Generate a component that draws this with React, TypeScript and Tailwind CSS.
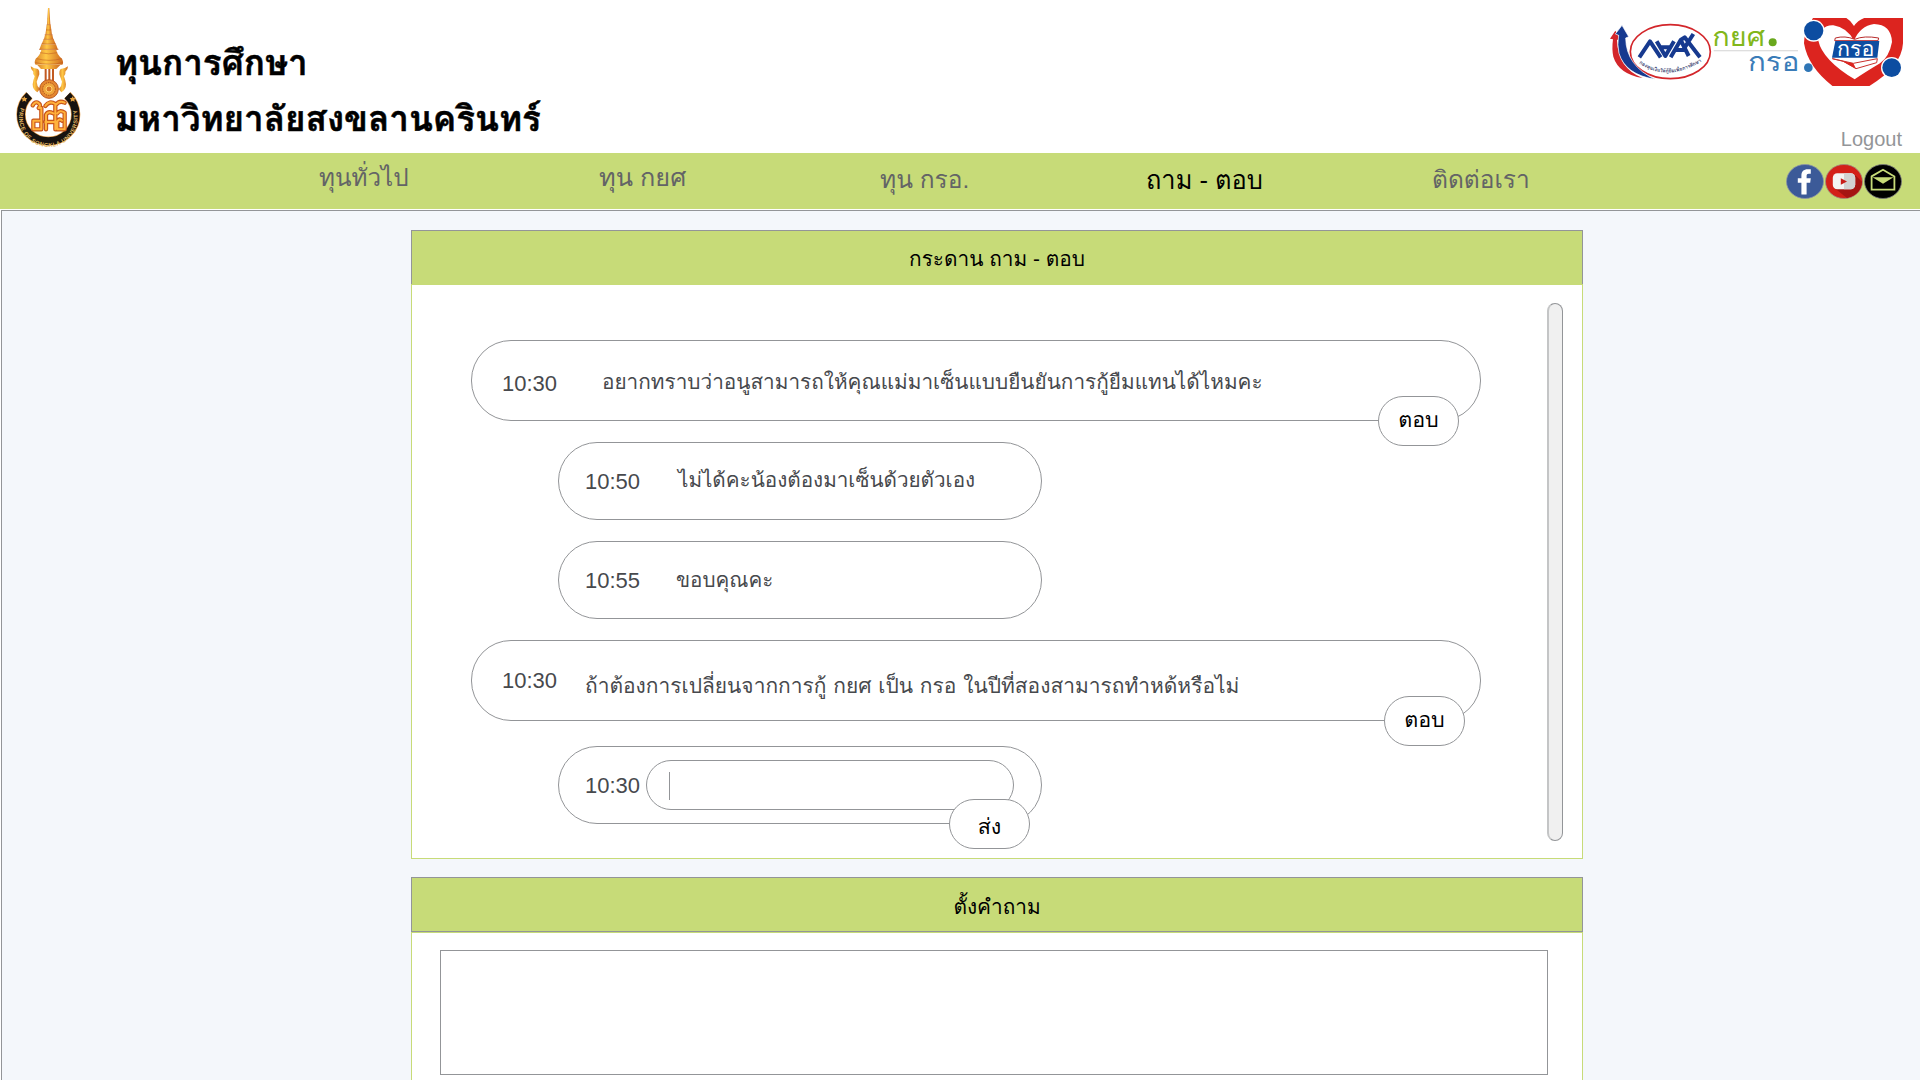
import type { ReactNode } from "react";

function Emblem() {
  return (
    <svg className="h-[153px] w-[100px] shrink-0" viewBox="0 0 300 459" aria-hidden="true">
      <defs>
        <linearGradient id="gold" x1="0" x2="1" y1="0" y2="0">
          <stop offset="0" stopColor="#d9822b" />
          <stop offset="0.4" stopColor="#ffc845" />
          <stop offset="1" stopColor="#cf6a1f" />
        </linearGradient>
        <path id="motto" d="M64 320 A88 87 0 1 0 226 320" />
      </defs>
      <g fill="url(#gold)">
        <path d="M144 24h4l2 34h-8z" />
        <path d="M142 56h8l1 18h-10z" />
        <path d="M140 74h12l2 16h-16z" />
        <path d="M138 90h16l2 14h-20z" />
        <path d="M135 104h22l3 14h-28z" />
        <path d="M131 118h30l6 14h-42z" />
        <path d="M124 133h44l6 16h-56z" />
        <path d="M124 150h45q2 14 17 26 6 12 1 18h-80q-6-6 0-18 13-10 17-26z" />
        <path d="M112 195h69l-12 12h-46z" />
        <path d="M134 207h6v38h-6zM145 207h6v36h-6zM156 207h6v38h-6z" fill="#c25a22" />
        <path d="M92 199q8 6 22 8 6 6 4 16l-8 22q0 12 10 22l-8 10q-14-8-14-24 2-14 6-24-6-8-4-14-8-6-8-16z" />
        <path d="M204 199q-8 6-22 8-6 6-4 16l8 22q0 12-10 22l8 10q14-8 14-24-2-14-6-24 6-8 4-14 8-6 8-16z" />
      </g>
      <g stroke="#b8511d" strokeWidth="2" fill="none" opacity="0.7">
        <path d="M140 74h12M138 90h16M134 104h24M130 118h32M124 132h44M117 148h59M110 176q37 10 75 0M106 188q42 9 82 0M120 158q26 7 52 0" />
      </g>
      <circle cx="147" cy="267" r="28" fill="#e5882f" stroke="#b95620" strokeWidth="3" />
      <circle cx="147" cy="267" r="19" fill="#f0a63c" stroke="#a94a1d" strokeWidth="3" strokeDasharray="4 3" />
      <circle cx="147" cy="267" r="9" fill="#d87528" stroke="#ffd36a" strokeWidth="3" />
      <path d="M88 286 A82 80 0 1 0 202 286" fill="none" stroke="#e9a04b" strokeWidth="28" />
      <path d="M88 286 A82 80 0 1 0 202 286" fill="none" stroke="#171310" strokeWidth="24" />
      <path d="M73 289l3 5 6 1-4 4 1 6-6-3-6 3 1-6-4-4 6-1zM218 289l3 5 6 1-4 4 1 6-6-3-6 3 1-6-4-4 6-1z" fill="#e7a23d" />
      <text fill="#e2b760" fontFamily="Liberation Sans, sans-serif" fontWeight="700" fontSize="17">
        <textPath href="#motto" startOffset="4" textLength="330" lengthAdjust="spacing">
          PRINCE OF SONGKLA UNIVERSITY
        </textPath>
      </text>
      <g fill="none" stroke="#c9561b" strokeWidth="13" strokeLinejoin="round" strokeLinecap="round">
        <path d="M98 316q8-14 18-6 8 6 0 14h8v64h-24v-26h18M136 318q12-18 30-6v76M138 388v-44q6-12 22-4M136 366h26M172 340q8-12 22-2v50h-22v-24q6-10 14-2M168 314q10-14 26-6" />
      </g>
      <g fill="none" stroke="#ffb13b" strokeWidth="6" strokeLinejoin="round" strokeLinecap="round">
        <path d="M98 316q8-14 18-6 8 6 0 14h8v64h-24v-26h18M136 318q12-18 30-6v76M138 388v-44q6-12 22-4M136 366h26M172 340q8-12 22-2v50h-22v-24q6-10 14-2M168 314q10-14 26-6" />
      </g>
    </svg>
  );
}

function LoanFundLogos() {
  return (
    <svg className="h-[90px] w-[320px]" viewBox="0 0 960 270" aria-hidden="true">
      <defs>
        <path id="fund-arc" d="M117 160 Q205 220 312 150" />
        <clipPath id="heart-box">
          <rect x="600" y="24" width="309" height="204" />
        </clipPath>
      </defs>

      <ellipse cx="211" cy="125" rx="120" ry="81" fill="#fff" stroke="#d3262b" strokeWidth="5" />
      <path d="M30 86 L46 62 L60 86 L51 90 Q54 176 128 204 Q56 192 40 140 Q35 118 39 88z" fill="#d3262b" />
      <path d="M46 72 L66 46 L86 80 L77 84 Q78 168 166 208 Q76 194 57 130 Q51 104 56 76z" fill="#16398f" stroke="#fff" strokeWidth="2" />
      <g fill="none" stroke="#16398f" strokeWidth="12" strokeLinejoin="round">
        <path d="M118 142 L150 94 L182 142" />
        <path d="M170 94 L196 138 L222 94 M182 112 H212" />
        <path d="M212 142 L242 90 L266 138 M224 120 H256" />
        <path d="M242 90 L254 82 L300 142 M252 116 L280 72" />
      </g>
      <text fill="#333a6c" fontFamily="Loma, Liberation Sans, sans-serif" fontWeight="700" fontSize="15">
        <textPath href="#fund-arc">กองทุนเงินให้กู้ยืมเพื่อการศึกษา</textPath>
      </text>

      <text x="337" y="108" fontSize="80" textLength="158" lengthAdjust="spacingAndGlyphs" fill="#82b71b" fontFamily="Loma, sans-serif">
        กยศ
      </text>
      <circle cx="518" cy="97" r="12" fill="#69a81d" />
      <rect x="341" y="120" width="253" height="4" fill="#dedede" />
      <text x="444" y="184" fontSize="80" textLength="154" lengthAdjust="spacingAndGlyphs" fill="#3a7cb8" fontFamily="Loma, sans-serif">
        กรอ
      </text>

      <g clipPath="url(#heart-box)">
        <path d="M640 22 H735 Q752 30 762 48 Q774 30 798 22 H909 V100 Q905 170 805 230 H700 Q624 172 612 100 Q612 70 630 40z" fill="#dc241f" />
        <path d="M764 208 Q668 150 655 92 Q660 44 700 46 Q740 52 762 92 Q780 48 822 42 Q874 44 876 96 Q868 140 840 160 Q790 190 764 208z" fill="#fff" />
      </g>
      <circle cx="625" cy="173" r="13" fill="#2f76b6" />
      <circle cx="641" cy="62" r="33" fill="#fff" />
      <circle cx="641" cy="62" r="29" fill="#0d4da1" />
      <circle cx="875" cy="173" r="32" fill="#fff" />
      <circle cx="875" cy="173" r="28" fill="#0d4da1" />
      <path d="M706 84 Q735 76 764 88 Q792 76 836 84 L834 92 H704z" fill="#fff" stroke="#b82a2a" strokeWidth="3" />
      <path d="M697 146 L760 160 L832 146 L830 158 L768 176 L730 154z" fill="#fff" stroke="#c9302c" strokeWidth="3" />
      <path d="M726 153 L760 160 L768 176z" fill="#dc241f" />
      <path d="M706 93 H838 L832 143 H696z" fill="#0d4da1" />
      <text x="711" y="138" fontSize="60" textLength="112" lengthAdjust="spacingAndGlyphs" fill="#fff" fontFamily="Loma, sans-serif">
        กรอ
      </text>
    </svg>
  );
}

function SocialIcons() {
  return (
    <div className="mt-[11px] flex h-[35px] gap-px">
      <svg className="h-[35px] w-[38px]" viewBox="0 0 38 35" aria-label="Facebook">
        <ellipse cx="19" cy="17.5" rx="18.5" ry="17" fill="#3c5a98" stroke="#8a93a8" strokeWidth="0.8" />
        <path d="M15.4 30.5V18.8h-3.6v-4.6h3.6v-2.8c0-4 2.4-6.2 6.2-6.2h3.2v4.6h-2c-1.6 0-2.2.8-2.2 2.2v2.2h4.2l-.6 4.6h-3.6v11.7z" fill="#fff" />
      </svg>
      <svg className="h-[35px] w-[38px]" viewBox="0 0 38 35" aria-label="YouTube">
        <ellipse cx="19" cy="17.5" rx="18.5" ry="17" fill="#d32019" stroke="#a08a80" strokeWidth="0.8" />
        <path d="M29.5 10.5 L37 17.8 Q36 31 22 34 L10 24.5z" fill="#a51512" />
        <rect x="7.8" y="9.3" width="22.4" height="16" rx="4.5" fill="#f4f4f4" />
        <path d="M19 9.3h6.7a4.5 4.5 0 0 1 4.5 4.5v7a4.5 4.5 0 0 1-4.5 4.5H19z" fill="#d2d2d2" />
        <path d="M15.8 14.2l6.2 3.3-6.2 3.3z" fill="#c81e1a" />
      </svg>
      <svg className="h-[35px] w-[38px]" viewBox="0 0 38 35" aria-label="Email">
        <ellipse cx="19" cy="17.5" rx="18.5" ry="17" fill="#000" stroke="#77777c" strokeWidth="0.8" />
        <path d="M7.6 12.4 L19 5.8 L30.4 12.4 V25.6 H7.6z" fill="none" stroke="#c7db78" strokeWidth="1.8" />
        <path d="M8.5 13.2 H29.5 L19 19.8z" fill="#c7db78" />
      </svg>
    </div>
  );
}

const navItems = [
  { label: "ทุนทั่วไป", box: "w-[280px] mt-[10px]", text: "text-[24.2px] text-[#636466]" },
  { label: "ทุน กยศ", box: "w-[281px] mt-[9px]", text: "text-[25.3px] text-[#636466]" },
  { label: "ทุน กรอ.", box: "w-[266px] mt-[12px]", text: "text-[24.5px] text-[#636466]" },
  { label: "ถาม - ตอบ", box: "w-[286px] mt-[12px]", text: "text-[25.4px] text-black" },
  { label: "ติดต่อเรา", box: "w-[354px] mt-[12px]", text: "text-[24.5px] text-[#636466]" },
];

function Bubble({ className, children }: { className: string; children: ReactNode }) {
  return <div className={`relative flex items-start border border-[#939598] bg-white ${className}`}>{children}</div>;
}

function Time({ className, children }: { className: string; children: string }) {
  return <span className={`shrink-0 text-[22px] leading-[30px] ${className}`}>{children}</span>;
}

function Message({ className, children }: { className: string; children: string }) {
  return <span className={`leading-[30px] whitespace-nowrap ${className}`}>{children}</span>;
}

function PillButton({ className, children }: { className: string; children: string }) {
  return (
    <button
      className={`absolute flex h-[50px] w-[81px] justify-center rounded-[25px] border border-[#939598] bg-white text-[21.5px] leading-[30px] text-black ${className}`}
    >
      {children}
    </button>
  );
}

export default function App() {
  return (
    <div className="h-screen w-full overflow-hidden bg-white font-['Liberation_Sans',Loma,sans-serif] text-[#47494d]">
      <header className="flex h-[153px]">
        <Emblem />
        <h1 className="ml-[15px] pt-[35px] text-[35px] leading-[56px] font-bold whitespace-nowrap text-black [-webkit-text-stroke:0.5px_black]">
          ทุนการศึกษา
          <br />
          มหาวิทยาลัยสงขลานครินทร์
        </h1>
        <div className="ml-auto flex flex-col pt-[10px]">
          <LoanFundLogos />
          <a className="mt-[27px] self-end pr-[18px] text-[20px] leading-[24px] text-[#939598]">Logout</a>
        </div>
      </header>

      <nav className="flex h-[56px] items-start bg-[#c7db78] pl-[319px]">
        {navItems.map((item) => (
          <a key={item.label} className={`shrink-0 leading-[30px] whitespace-nowrap ${item.box} ${item.text}`}>
            {item.label}
          </a>
        ))}
        <SocialIcons />
      </nav>

      <main className="mt-px ml-px h-[870px] border-t border-l border-[#939598] bg-[#f4f7fb] pt-[19px] pl-[409px]">
        <section className="w-[1172px]">
          <h2 className="flex h-[54px] justify-center border border-b-0 border-[#939598] bg-[#c7db78] pt-[13px] text-[20.8px] leading-[30px] text-black">
            กระดาน ถาม - ตอบ
          </h2>
          <div className="flex h-[575px] items-start border border-[#c7db78] bg-white">
            <div className="flex w-[1135px] flex-col pt-[55px]">
              <Bubble className="ml-[59px] h-[81px] w-[1010px] rounded-[40px]">
                <Time className="mt-[28px] ml-[30px] w-[100px]">10:30</Time>
                <Message className="mt-[26px] text-[20.76px]">
                  อยากทราบว่าอนูสามารถให้คุณแม่มาเซ็นแบบยืนยันการกู้ยืมแทนได้ไหมคะ
                </Message>
                <PillButton className="top-[55px] left-[906px] pt-[8px]">ตอบ</PillButton>
              </Bubble>
              <Bubble className="mt-[21px] ml-[146px] h-[78px] w-[484px] rounded-[39px]">
                <Time className="mt-[24px] ml-[26px] w-[93px]">10:50</Time>
                <Message className="mt-[22px] text-[20.65px]">ไม่ได้คะน้องต้องมาเซ็นด้วยตัวเอง</Message>
              </Bubble>
              <Bubble className="mt-[21px] ml-[146px] h-[78px] w-[484px] rounded-[39px]">
                <Time className="mt-[24px] ml-[26px] w-[91px]">10:55</Time>
                <Message className="mt-[23px] text-[20.6px]">ขอบคุณคะ</Message>
              </Bubble>
              <Bubble className="mt-[21px] ml-[59px] h-[81px] w-[1010px] rounded-[40px]">
                <Time className="mt-[25px] ml-[30px] w-[83px]">10:30</Time>
                <Message className="mt-[30px] text-[20.95px] [word-spacing:1px]">
                  ถ้าต้องการเปลี่ยนจากการกู้ กยศ เป็น กรอ ในปีที่สองสามารถทำหด้หรือไม่
                </Message>
                <PillButton className="top-[55px] left-[912px] pt-[8px]">ตอบ</PillButton>
              </Bubble>
              <Bubble className="mt-[25px] ml-[146px] h-[78px] w-[484px] rounded-[39px]">
                <Time className="mt-[24px] ml-[26px] w-[61px]">10:30</Time>
                <div className="mt-[13px] flex h-[50px] w-[368px] rounded-[25px] border border-[#939598] bg-white">
                  <span className="mt-[11px] ml-[22px] h-[28px] w-px bg-[#939598]" />
                </div>
                <PillButton className="top-[52px] left-[390px] pt-[12px]">ส่ง</PillButton>
              </Bubble>
            </div>
            <div className="mt-[18px] h-[538px] w-[16px] rounded-[8px] border border-l-2 border-[#939598] border-l-[#c4c5c6] bg-[#f0f0f0]" />
          </div>
        </section>

        <section className="mt-[18px] w-[1172px]">
          <h2 className="flex h-[55px] justify-center border border-[#939598] bg-[#c7db78] pt-[14px] text-[20.8px] leading-[30px] text-black">
            ตั้งคำถาม
          </h2>
          <div className="h-[200px] border border-[#c7db78] bg-white pt-[17px] pl-[28px]">
            <div className="h-[125px] w-[1108px] border border-[#939598]" />
          </div>
        </section>
      </main>
    </div>
  );
}
